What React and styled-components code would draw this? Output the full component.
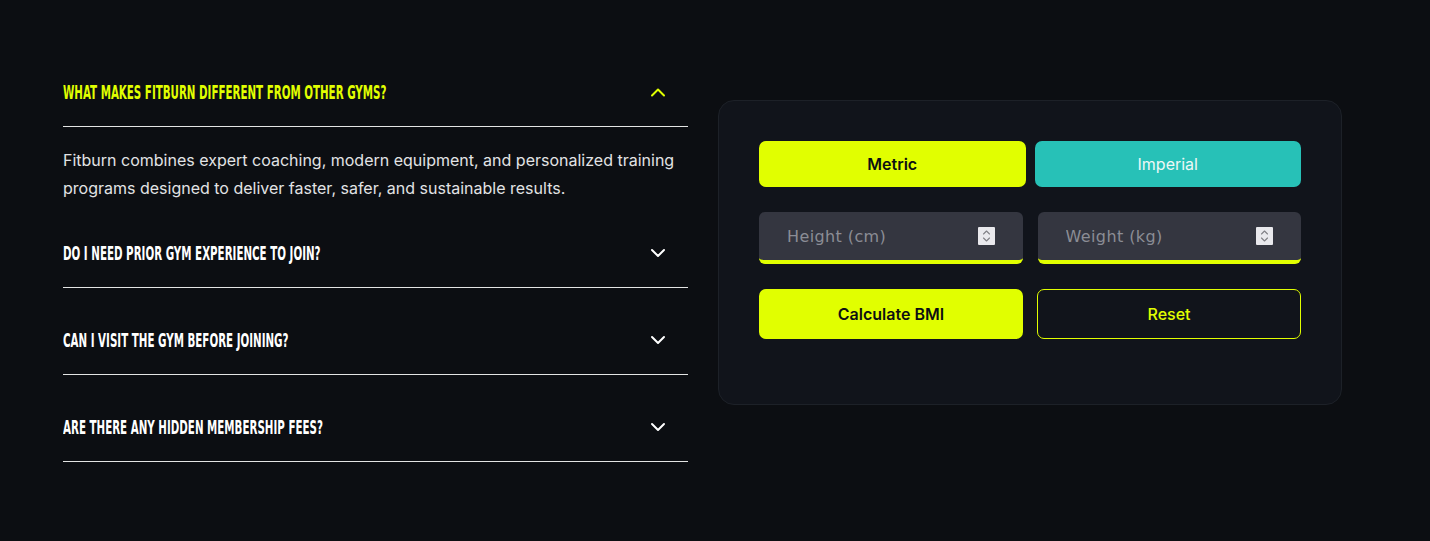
import React, { useState } from "react";
import styled, { createGlobalStyle } from "styled-components";

const Global = createGlobalStyle`
  html, body { margin: 0; padding: 0; background: #0c0e12; }
  body { font-family: Inter, "Noto Sans", sans-serif; color: #e6e6e6; }
  * { box-sizing: border-box; }
`;

const Page = styled.div`
  width: 1430px;
  height: 541px;
  display: flex;
  align-items: flex-start;
  gap: 30px;
  padding: 40px 0 0 63px;
  background: #0c0e12;
`;

const Faq = styled.div`
  width: 625px;
  display: flex;
  flex-direction: column;
`;

const Item = styled.div`
  padding-top: 18px;
`;

const Header = styled.button`
  width: 100%;
  height: 69px;
  display: flex;
  align-items: center;
  justify-content: space-between;
  padding: 0 22px 1px 0;
  background: none;
  border: none;
  border-bottom: 1px solid #e4e4e4;
  cursor: pointer;
  color: ${(p) => (p.$open ? "#e1ff00" : "#ffffff")};
`;

const Question = styled.span`
  font-family: "DejaVu Sans Condensed", "DejaVu Sans", sans-serif;
  font-weight: 700;
  font-size: 20px;
  letter-spacing: 0px;
  text-transform: uppercase;
  white-space: nowrap;
  display: inline-block;
  transform: scaleX(0.572);
  transform-origin: left center;
`;

const Answer = styled.p`
  margin: 0;
  padding-top: 19px;
  margin-bottom: -1px;
  font-size: 16px;
  line-height: 28px;
  color: #e2e3e5;
  font-weight: 400;
`;

const Chevron = ({ up }) => (
  <svg width="16" height="10" viewBox="0 0 16 10" fill="none">
    <path
      d={up ? "M2 8.5L8 2.5L14 8.5" : "M2 2L8 8L14 2"}
      stroke="currentColor"
      strokeWidth="2"
      strokeLinecap="round"
      strokeLinejoin="round"
    />
  </svg>
);

const Card = styled.div`
  margin-top: 60px;
  width: 624px;
  height: 305px;
  background: #11141b;
  border: 1px solid #1d2128;
  border-radius: 16px;
  padding: 40px 40px;
  display: flex;
  flex-direction: column;
  gap: 25px;
`;

const Row = styled.div`
  display: grid;
  grid-template-columns: repeat(2, minmax(0, 1fr));
  gap: ${(p) => p.$gap}px;
`;

const Toggle = styled.button`
  height: 46px;
  border: none;
  border-radius: 7px;
  font-family: Inter, sans-serif;
  font-size: 16px;
  cursor: pointer;
  background: ${(p) => (p.$active ? "#e1ff00" : "#27c1b7")};
  color: ${(p) => (p.$active ? "#0d0f12" : "#eef8f6")};
  font-weight: ${(p) => (p.$active ? 600 : 400)};
`;

const Field = styled.label`
  height: 52px;
  min-width: 0;
  display: flex;
  align-items: center;
  background: #343640;
  border-bottom: 4px solid #e1ff00;
  border-radius: 6px;
  padding: 0 28px 0 28px;
`;

const Input = styled.input`
  flex: 1;
  width: 0;
  min-width: 0;
  height: 100%;
  background: transparent;
  border: none;
  padding: 0;
  font-family: "DejaVu Sans", sans-serif;
  font-size: 16px;
  letter-spacing: 0.4px;
  color: #e6e6e6;
  outline: none;
  -moz-appearance: textfield;
  &::placeholder { color: #8b8d95; }
  &::-webkit-inner-spin-button,
  &::-webkit-outer-spin-button { -webkit-appearance: none; margin: 0; }
`;

const SpinBox = styled.span`
  flex: none;
  width: 17px;
  height: 18px;
  background: #e9e9ed;
  border-radius: 1px;
  display: flex;
  align-items: center;
  justify-content: center;
  color: #808086;
`;

const Spinner = () => (
  <SpinBox>
    <svg width="9" height="14" viewBox="0 0 9 14" fill="none">
      <path d="M1.5 5L4.5 2L7.5 5" stroke="currentColor" strokeWidth="1.1" strokeLinecap="round" strokeLinejoin="round" />
      <path d="M1.5 9L4.5 12L7.5 9" stroke="currentColor" strokeWidth="1.1" strokeLinecap="round" strokeLinejoin="round" />
    </svg>
  </SpinBox>
);

const Action = styled.button`
  height: 50px;
  border-radius: 7px;
  font-family: Inter, sans-serif;
  font-size: 16px;
  cursor: pointer;
  font-weight: ${(p) => (p.$primary ? 600 : 500)};
  background: ${(p) => (p.$primary ? "#e1ff00" : "transparent")};
  color: ${(p) => (p.$primary ? "#0d0f12" : "#e1ff00")};
  border: ${(p) => (p.$primary ? "none" : "1px solid #e1ff00")};
`;

const faqs = [
  {
    q: "What makes Fitburn different from other gyms?",
    a: "Fitburn combines expert coaching, modern equipment, and personalized training programs designed to deliver faster, safer, and sustainable results.",
  },
  { q: "Do I need prior gym experience to join?", a: "" },
  { q: "Can I visit the gym before joining?", a: "" },
  { q: "Are there any hidden membership fees?", a: "" },
];

export default function App() {
  const [open, setOpen] = useState(0);
  const [metric, setMetric] = useState(true);
  return (
    <>
      <Global />
      <Page>
        <Faq>
          {faqs.map((f, i) => (
            <Item key={i}>
              <Header $open={open === i} onClick={() => setOpen(open === i ? -1 : i)}>
                <Question>{f.q}</Question>
                <Chevron up={open === i} />
              </Header>
              {open === i && <Answer>{f.a}</Answer>}
            </Item>
          ))}
        </Faq>
        <Card>
          <Row $gap={9}>
            <Toggle $active={metric} onClick={() => setMetric(true)}>Metric</Toggle>
            <Toggle $active={!metric} onClick={() => setMetric(false)}>Imperial</Toggle>
          </Row>
          <Row $gap={15}>
            <Field>
              <Input type="number" placeholder="Height (cm)" />
              <Spinner />
            </Field>
            <Field>
              <Input type="number" placeholder="Weight (kg)" />
              <Spinner />
            </Field>
          </Row>
          <Row $gap={14}>
            <Action $primary>Calculate BMI</Action>
            <Action>Reset</Action>
          </Row>
        </Card>
      </Page>
    </>
  );
}
